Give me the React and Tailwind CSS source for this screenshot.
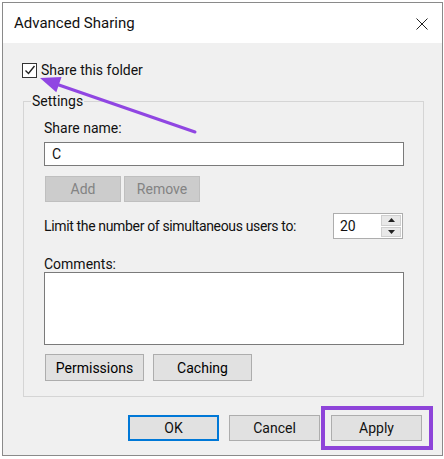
import React from "react";

const font = "font-['Roboto','Noto_Sans',sans-serif]";

function WinButton({ children, className = "", disabled = false }) {
  return (
    <button
      disabled={disabled}
      className={`h-[26px] border text-[14px] leading-none ${
        disabled
          ? "bg-[#cccccc] border-[#bfbfbf] text-[#838383]"
          : "bg-[#e1e1e1] border-[#adadad] text-black"
      } ${className}`}
    >
      {children}
    </button>
  );
}

export default function App() {
  return (
    <div className={`relative w-[444px] h-[459px] bg-white text-[#111] ${font}`}>
      <div className="ml-[2px] mt-[2px] w-[441px] h-[454px] border border-[#8a8a8a] flex flex-col">
        {/* Title bar */}
        <div className="h-[40px] bg-white flex items-center justify-between pl-[11px] pr-[14px]">
          <span className="text-[15px]">Advanced Sharing</span>
          <svg width="12" height="12" viewBox="0 0 12 12" className="mt-[1px]">
            <path d="M0.5 0.5 L11.5 11.5 M11.5 0.5 L0.5 11.5" stroke="#222" strokeWidth="1" />
          </svg>
        </div>

        {/* Body */}
        <div className="flex-1 bg-[#f0f0f0] pl-[20px] pt-[20px] text-[14px]">
          <label className="flex items-center h-[14px] -ml-[1px]">
            <span className="w-[15px] h-[15px] border border-[#333] bg-white flex items-center justify-center">
              <svg width="12" height="12" viewBox="0 0 12 12">
                <path d="M1.5 6.5 L4.5 9.5 L10.5 2" stroke="#222" strokeWidth="1.4" fill="none" />
              </svg>
            </span>
            <span className="ml-[4px]">Share this folder</span>
          </label>

          <fieldset className="mt-[15px] w-[401px] border border-[#d5d5d5] pl-[20px] pt-[9px] pb-[15px]">
            <legend className="-ml-[13px] px-[1px] leading-[18px]">Settings</legend>

            <div className="leading-[18px]">Share name:</div>
            <div className="mt-[5px] w-[360px] h-[24px] border border-[#7a7a7a] bg-white flex items-center pl-[7px]">
              C
            </div>

            <div className="mt-[10px] flex gap-[3px] ml-[1px]">
              <WinButton disabled className="w-[76px]">Add</WinButton>
              <WinButton disabled className="w-[76px]">Remove</WinButton>
            </div>

            <div className="mt-[11px] w-[360px] flex items-center justify-between">
              <span className="tracking-[-0.35px]">Limit the number of simultaneous users to:</span>
              <div className="mr-[1px] w-[70px] h-[26px] border border-[#adadad] bg-white flex">
                <div className="flex-1 flex items-center pl-[6px]">20</div>
                <div className="w-[20px] my-[1px] mr-[1px] flex flex-col gap-[1px]">
                  <div className="flex-1 bg-[#e8e8e8] border border-[#cfcfcf] flex items-center justify-center">
                    <svg width="7" height="4" viewBox="0 0 7 4">
                      <path d="M0 4 L3.5 0 L7 4 Z" fill="#222" />
                    </svg>
                  </div>
                  <div className="flex-1 bg-[#e8e8e8] border border-[#cfcfcf] flex items-center justify-center">
                    <svg width="7" height="4" viewBox="0 0 7 4">
                      <path d="M0 0 L3.5 4 L7 0 Z" fill="#222" />
                    </svg>
                  </div>
                </div>
              </div>
            </div>

            <div className="mt-[18px] leading-[15px]">Comments:</div>
            <div className="w-[360px] h-[73px] border border-[#7a7a7a] bg-white" />

            <div className="mt-[9px] flex gap-[9px] ml-[1px]">
              <WinButton className="w-[99px] h-[27px]">Permissions</WinButton>
              <WinButton className="w-[99px] h-[27px]">Caching</WinButton>
            </div>
          </fieldset>

          <div className="mt-[9px] -ml-[20px] pl-[125px] flex items-center">
            <button className="w-[91px] h-[26px] bg-[#e1e1e1] border-2 border-[#0078d7] text-[14px] leading-none">
              OK
            </button>
            <button className="ml-[10px] w-[91px] h-[26px] bg-[#e1e1e1] border border-[#adadad] text-[14px] leading-none">
              Cancel
            </button>
            <div className="ml-[1px] border-4 border-[#8e44d9] pl-[6px] pr-[7px] py-[5px]">
              <button className="w-[91px] h-[26px] bg-[#e1e1e1] border border-[#adadad] text-[14px] leading-none block">
                Apply
              </button>
            </div>
          </div>
        </div>
      </div>

      {/* Annotation arrow */}
      <svg
        className="absolute left-0 top-0 pointer-events-none"
        width="444"
        height="459"
        viewBox="0 0 444 459"
      >
        <line x1="195" y1="130" x2="56" y2="82" stroke="#9046e2" strokeWidth="3" strokeLinecap="round" />
        <path d="M40 76 L61.5 75 L56.3 90.2 Z" fill="#9046e2" />
      </svg>
    </div>
  );
}
